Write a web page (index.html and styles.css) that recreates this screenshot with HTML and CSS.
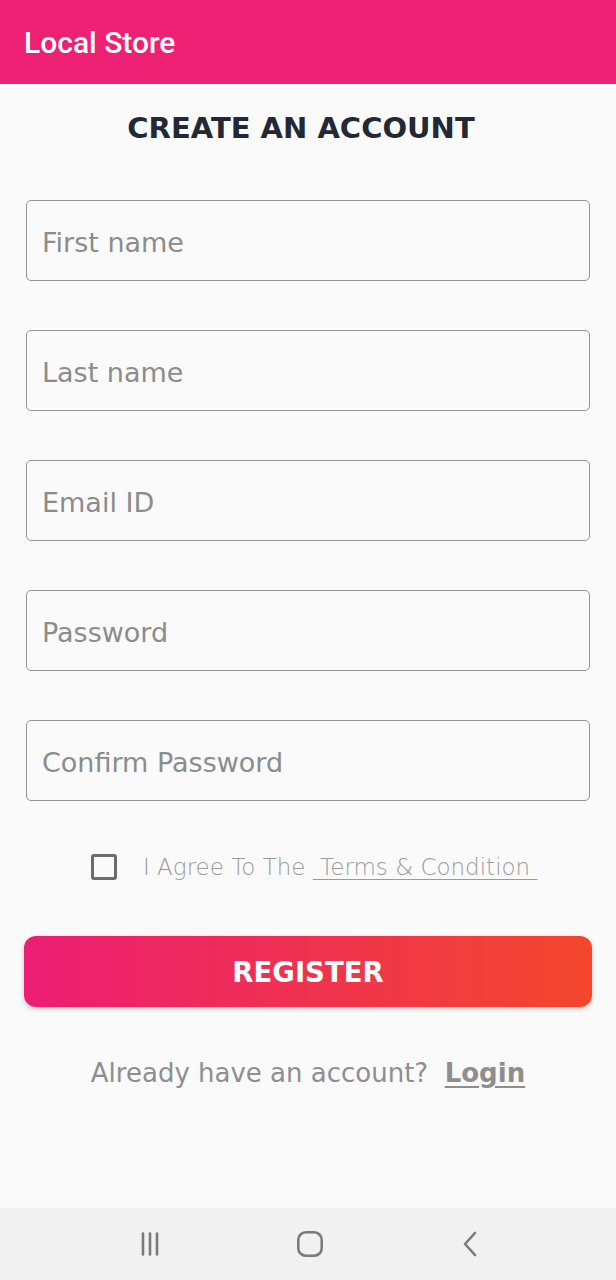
FILE: index.html
```html
<!DOCTYPE html>
<html lang="en">
<head>
<meta charset="utf-8">
<title>Local Store</title>
<link rel="stylesheet" href="styles.css">
</head>
<body>
<header class="appbar"><span class="appbar-title">Local Store</span></header>
<main class="content">
  <h1 class="heading">CREATE AN ACCOUNT</h1>
  <form class="form">
    <input class="field" type="text" placeholder="First name">
    <input class="field" type="text" placeholder="Last name">
    <input class="field" type="email" placeholder="Email ID">
    <input class="field" type="password" placeholder="Password">
    <input class="field" type="password" placeholder="Confirm Password">
  </form>
  <div class="agree">
    <span class="checkbox"></span>
    <span class="agree-text">I Agree To The <span class="terms">&nbsp;Terms &amp; Condition&nbsp;</span></span>
  </div>
  <button class="register" type="button">REGISTER</button>
  <p class="login-line">Already have an account?&nbsp; <a class="login" href="#">Login</a></p>
</main>
<nav class="navbar">
  <svg class="nav-icon" width="26" height="26" viewBox="0 0 26 26"><path d="M6 2.5v21M13 2.5v21M20 2.5v21" stroke="#7a7a7a" stroke-width="2.6" stroke-linecap="round" fill="none"/></svg>
  <svg class="nav-icon" width="28" height="28" viewBox="0 0 28 28"><rect x="2.3" y="2.3" width="23.4" height="23.4" rx="7.5" stroke="#7a7a7a" stroke-width="2.6" fill="none"/></svg>
  <svg class="nav-icon" width="26" height="26" viewBox="0 0 26 26"><path d="M18 2 L8 13 L18 24" stroke="#7a7a7a" stroke-width="2.6" stroke-linecap="round" stroke-linejoin="round" fill="none"/></svg>
</nav>
</body>
</html>
```
FILE: styles.css
```css
* { box-sizing: border-box; }
html, body { margin: 0; padding: 0; }
body {
  width: 616px;
  min-height: 1280px;
  display: flex;
  flex-direction: column;
  background: #fafafa;
  font-family: "DejaVu Sans", "Open Sans", sans-serif;
}
.appbar {
  height: 84px;
  background: #ed2073;
  display: flex;
  align-items: center;
  padding-left: 24px;
  flex-shrink: 0;
}
.appbar-title {
  font-family: Roboto, "Liberation Sans", sans-serif;
  font-weight: 500;
  font-size: 30px;
  color: #ffffff;
  margin-top: 1px;
}
.content {
  flex: 1;
  display: flex;
  flex-direction: column;
  align-items: center;
}
.heading {
  margin: 27px 14px 0 0;
  font-size: 29px;
  line-height: 34px;
  font-weight: 700;
  color: #222834;
  letter-spacing: 0;
}
.form {
  margin-top: 55px;
  display: flex;
  flex-direction: column;
  gap: 49px;
  width: 564px;
}
.field {
  width: 564px;
  height: 81px;
  border: 1.5px solid #949494;
  border-radius: 5px;
  background: transparent;
  padding: 3px 0 0 15px;
  font-family: "DejaVu Sans", sans-serif;
  font-size: 27px;
  color: #333;
  outline: none;
}
.field::placeholder { color: #8c8c8c; font-weight: 400; }
.agree {
  margin-top: 52px;
  display: flex;
  align-items: center;
  align-self: flex-start;
  margin-left: 91px;
  height: 28px;
}
.checkbox {
  width: 26px;
  height: 26px;
  border: 3px solid #6c6c6c;
  border-radius: 3px;
  flex-shrink: 0;
}
.agree-text {
  margin-left: 26px;
  font-size: 23px;
  font-weight: 300;
  color: #9a9a9a;
  white-space: pre;
}
.terms { text-decoration: underline; text-underline-offset: 4px; text-decoration-thickness: 1px; }
.register {
  margin-top: 55px;
  width: 568px;
  height: 71px;
  border: none;
  border-radius: 12px;
  background: linear-gradient(90deg, #ec1d74 0%, #f3472c 100%);
  box-shadow: 0 2px 5px rgba(0,0,0,0.22);
  color: #ffffff;
  font-family: "DejaVu Sans", sans-serif;
  font-weight: 700;
  font-size: 27.5px;
  padding: 0;
}
.login-line {
  margin: 48px 0 0;
  font-size: 26px;
  line-height: 36px;
  color: #8e8e8e;
  font-weight: 400;
}
.login {
  color: #8e8e8e;
  font-weight: 700;
  text-decoration: underline;
  text-underline-offset: 4px;
}
.navbar {
  height: 72px;
  flex-shrink: 0;
  background: #f1f1f1;
  display: flex;
  align-items: center;
  justify-content: space-between;
  padding: 0 133px 0 137px;
}
.nav-icon { display: block; }
```
